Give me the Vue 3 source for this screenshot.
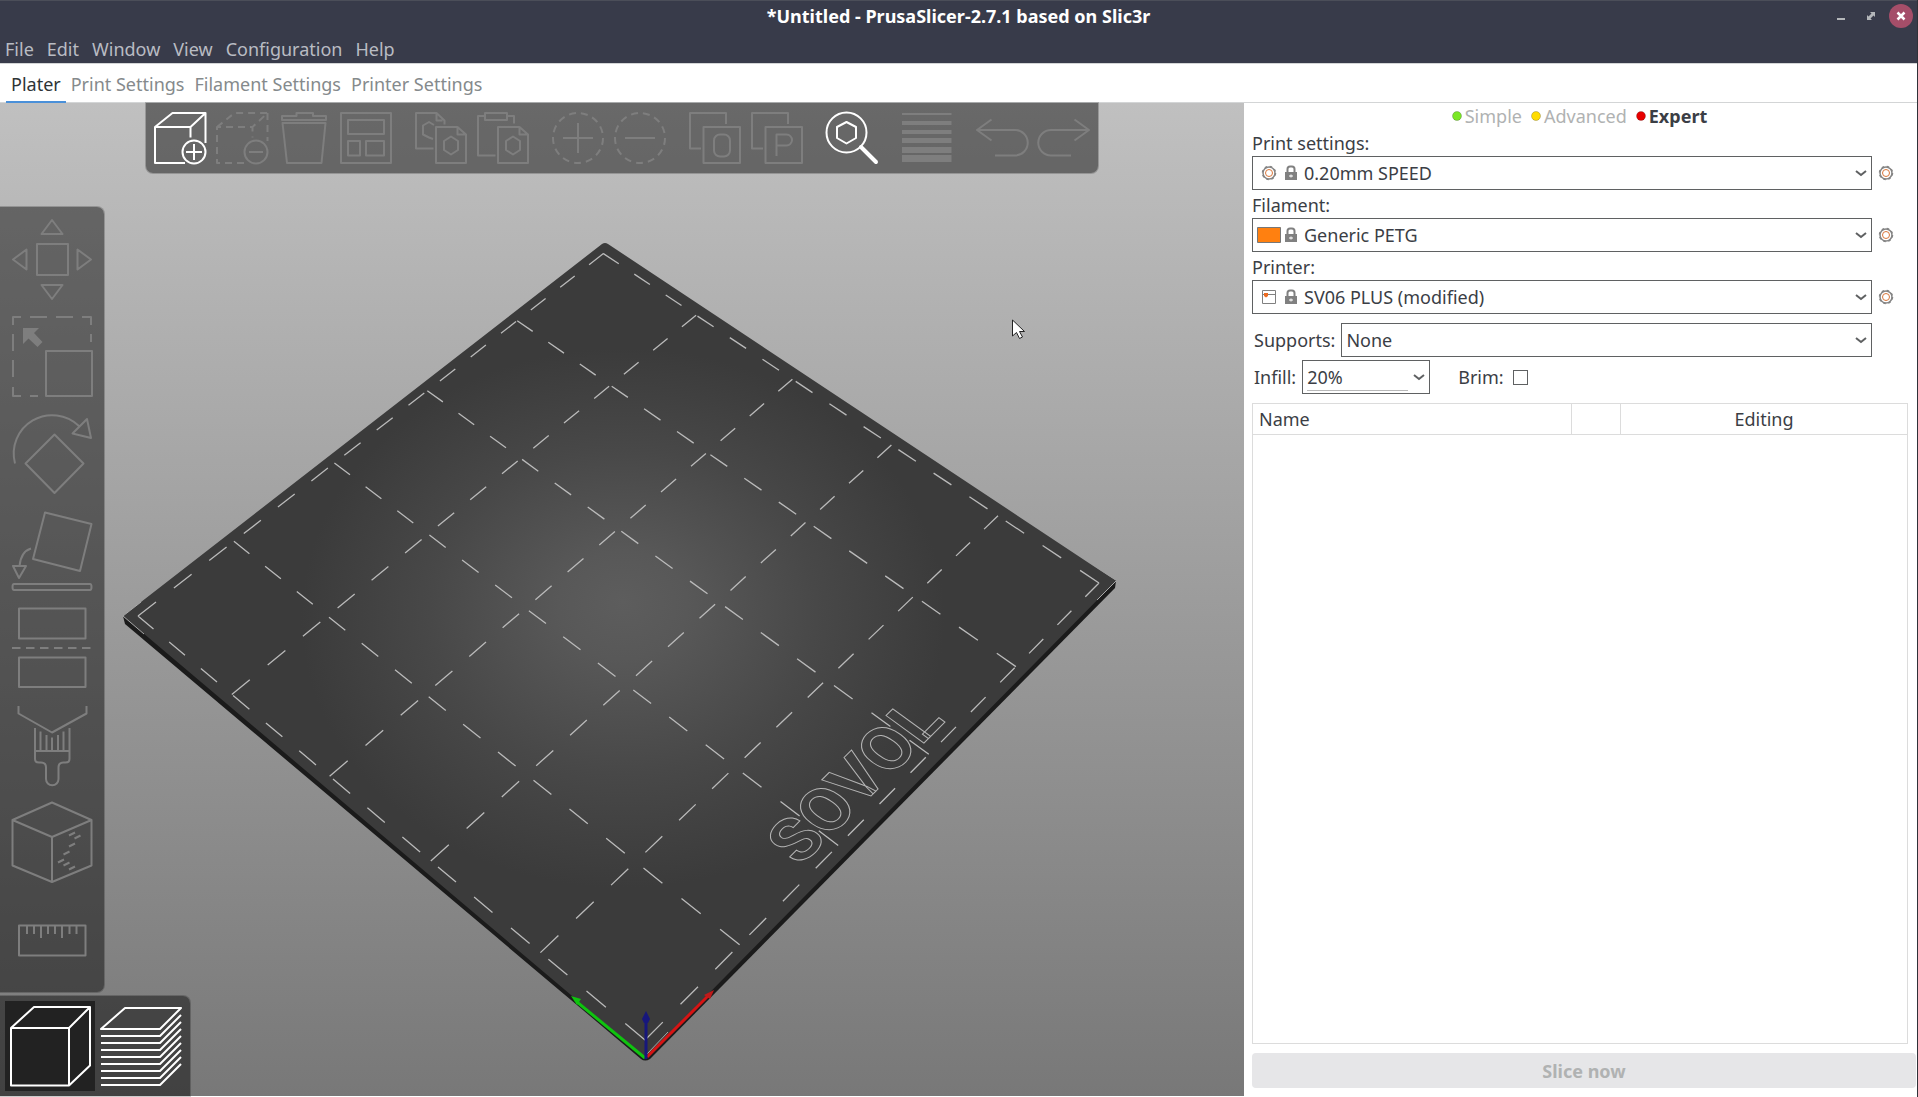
<script setup>
import { ref } from 'vue'

const menus = ['File', 'Edit', 'Window', 'View', 'Configuration', 'Help']
const tabs = ['Plater', 'Print Settings', 'Filament Settings', 'Printer Settings']
const activeTab = ref('Plater')

const modes = [
  { name: 'Simple', color: '#7be726' },
  { name: 'Advanced', color: '#ffdc00' },
  { name: 'Expert', color: '#e70000' }
]
const activeMode = ref('Expert')

const presets = [
  { id: 'print', label: 'Print settings:', value: '0.20mm SPEED' },
  { id: 'filament', label: 'Filament:', value: 'Generic PETG' },
  { id: 'printer', label: 'Printer:', value: 'SV06 PLUS (modified)' }
]

const infill = ref('20%')
const brim = ref(false)

const pageIcon = 'M21 15h21.5l8.5 7.5v28.5h-30zM42.5 15v7.5h8.5'
const pageHexagon = 'M36 24.5l7 4.5v9l-7 4.5l-7-4.5v-9z'

const toolGroups = [
  [
    {
      name: 'Add',
      active: true,
      paths: [
        'M31 51H1V15h35.5v10.5M1 15L18.5 1h33L36.5 15M51.500 1v30',
        'M51.500 40a11.500 11.500 0 1 1-23 0a11.500 11.500 0 1 1 23 0M32 40h16M40 32v16'
      ]
    },
    {
      name: 'Delete',
      paths: ['M51.500 40a11.500 11.500 0 1 1-23 0a11.500 11.500 0 1 1 23 0M33 40h14'],
      dashed: 'M28 51H1V15h35.500v10.500M1 15L18.500 1h33L36.500 15M51.500 1v28'
    },
    { name: 'Delete all', paths: ['M4 8V4h14.500V1h16.500v3h13v4zM4.500 11h43l-4 40h-34.500z'] },
    { name: 'Arrange', paths: ['M1 1h50v50H1zM8 8h36v14H8zM8 29h12v14.500H8zM26 29h18v14.500H26z'] }
  ],
  [
    {
      name: 'Copy',
      paths: ['M18.500 36.500H1V1h20.500l8 7.500v4M21.500 1v7.500h6M18 27l-4-1.500l-6-3v-9l6-3.500l5 3', pageIcon, pageHexagon]
    },
    { name: 'Paste', paths: ['M18.500 43.500H1V4h7M30 4h7v7.500M8 1h22v7H8z', pageIcon, pageHexagon] }
  ],
  [
    { name: 'Add instance', paths: ['M26 11v30M11 26h30'], dashed: 'M51 26a25 25 0 1 1-50 0a25 25 0 1 1 50 0' },
    { name: 'Remove instance', paths: ['M11 26h30'], dashed: 'M51 26a25 25 0 1 1-50 0a25 25 0 1 1 50 0' }
  ],
  [
    {
      name: 'Split to objects',
      paths: ['M12 36.500H1V1h36v11M14.500 15h36.500v36h-36.500z', 'M31 22.500h4a6 6 0 0 1 6 6v10a6 6 0 0 1-6 6h-4a6 6 0 0 1-6-6v-10a6 6 0 0 1 6-6z']
    },
    {
      name: 'Split to parts',
      paths: ['M12 36.500H1V1h36v11M14.500 15h36.500v36h-36.500z', 'M25.500 44v-21.500h10a5.500 5.500 0 0 1 0 11h-10']
    }
  ],
  [
    {
      name: 'Search',
      active: true,
      paths: ['M40.500 20.500a20 20 0 1 1-40 0a20 20 0 1 1 40 0M20.500 10l9.500 5v11l-9.500 5.500l-9.500-5.500v-11z'],
      bold: 'M35 35l3 3L50 50'
    }
  ],
  [
    {
      name: 'Variable layer height',
      fill: 'M1 1h49.500v2H1zM1 9h49.500v4H1zM1 18h49.500v4H1zM1 26h49.500v5H1zM1 35h49.500v6H1zM1 43h49.500v7H1z'
    }
  ],
  [
    { name: 'Undo', paths: ['M15.500 7.500L1 18l14.500 10.500M1 18h38a12.500 12.500 0 0 1 0 25.500H19'] },
    { name: 'Redo', paths: ['M36.500 7.500L51 18l-14.500 10.500M51 18h-38a12.500 12.500 0 0 0 0 25.500H33'] }
  ]
]

const gizmos = [
  {
    name: 'Move',
    path: 'M40 1l10.500 14h-21zM40 80l10.500-14h-21zM1 40.500l13.500-10v20zM79 40.500l-13.500-10v20zM25 25h31v31H25z'
  },
  {
    name: 'Scale',
    path: 'M1 9V1h8M18 1h17M44 1h17M70 1h9v8M79 18v8M1 18v17M1 44v17M1 71v9h8M18 80h8M34 35h46v45H34z',
    fill: 'M11 12h16l-5 5l8.500 9l-5 5l-9-8.500L11 28z'
  },
  {
    name: 'Rotate',
    path: 'M3 50.500A38.500 38.500 0 0 1 67 13M75 6l4 19l-18.500-4.500zM42.500 21.500l29 29l-29 29.500l-29-29.500z'
  },
  {
    name: 'Place on face',
    path: 'M33 2.500l46.500 11.500L68 61L21 49zM19 38.500q-10 3-11.500 17.500M1 56h13L7 68zM2 74h76q1.500 0 1.500 3t-1.500 3H2q-1.500 0-1.500-3t1.500-3z'
  },
  {
    name: 'Cut',
    path: 'M7 1.500h66.500v30H7zM7 50.500h66.500V80H7zM0 41h8.500M14 41h8.500M28 41h8.500M42 41h8.500M56 41h8.500M70 41h8.500'
  },
  {
    name: 'Paint-on supports',
    path: 'M6.500 2v7.500L40 28.500L74.500 9.500V2M23 24v31q0 3.500 4 3.500h2q5 0 5 5V75a6 6 0 0 0 12.500 0V63.500q0-5 5-5h2q4 0 4-3.500V24M23 47h34M28.500 27.500V47M34.500 31v16M40 33.500V47M46 31v16M51.500 27.500V47'
  },
  {
    name: 'Seam painting',
    path: 'M40 1.500L79.500 19v45.500L40 81L.500 64.500V19zM.500 19L40 36l39.500-17M40 36v45M57 34.500l6-3M62.500 37.500l6-3M57 45.500l6-3M51.500 53.500l6-3M46 61.500l6-3M51.500 64.500l6-3M57 68.500l6-3'
  },
  {
    name: 'Measure',
    path: 'M7 27.500h66.500v30H7zM15 28v8M22 28v8M29 28v12M36 28v8M43 28v8M50 28v12M57.500 28v8M64.500 28v8'
  }
]

// layer lines of the preview button, one below the other
const layerLines = Array.from({ length: 8 }, (_, i) => `M6 ${35 + i * 7}H65L86 ${14 + i * 7}`).join('')

// Maps bed coordinates (0..1 on both sides) to the tilted view.
const origin = [645, 1040]
const right = [1099, 583]
const left = [138, 616]
const perspX = 0.1446
const perspY = 0.1295

const project = (u, v) => {
  const w = 1 + perspX * u + perspY * v
  const axis = (k) =>
    (origin[k] + u * (right[k] * (1 + perspX) - origin[k]) + v * (left[k] * (1 + perspY) - origin[k])) / w
  return `${axis(0).toFixed(1)} ${axis(1).toFixed(1)}`
}

// Fifteen dashes on each line, a dash and a gap have the same length.
const gridStops = [0, 0.187, 0.393, 0.593, 0.796, 1]
const dashes = []
for (const stop of gridStops) {
  for (let i = 0; i < 15; i++) {
    const from = (i * 2) / 29
    const to = (i * 2 + 1) / 29
    dashes.push(`M${project(stop, from)}L${project(stop, to)}`)
    dashes.push(`M${project(from, stop)}L${project(to, stop)}`)
  }
}
const bedGrid = dashes.join('')
</script>

<template>
  <div class="window">
    <header class="titlebar">
      <h1 class="title">*Untitled - PrusaSlicer-2.7.1 based on Slic3r</h1>
      <div class="window-buttons">
        <button class="window-button" aria-label="Minimize">
          <svg width="24" height="24" viewBox="0 0 24 24"><path d="M8 14h8v2H8z" fill="#b4b7ba" /></svg>
        </button>
        <button class="window-button" aria-label="Restore">
          <svg width="24" height="24" viewBox="0 0 24 24">
            <path d="M11 8h5v5l-1.500-1.500L9.500 16.500H13H8v-5l1.500 1.500l5-5z" fill="none" />
            <path d="M11 8h5v5l-1.500-1.500l-1.500 1.500l-2-2l1.500-1.500zM8 11l1.500 1.500l1.500-1.500l2 2l-1.500 1.500L13 16H8z" fill="#b4b7ba" />
          </svg>
        </button>
        <button class="window-button window-button--close" aria-label="Close">
          <svg width="24" height="24" viewBox="0 0 24 24">
            <path d="M8.500 8.500l7 7M15.500 8.500l-7 7" stroke="#fff" stroke-width="2.500" />
          </svg>
        </button>
      </div>
    </header>

    <nav class="menubar">
      <a v-for="menu in menus" :key="menu" href="#" class="menu-item">{{ menu }}</a>
    </nav>

    <nav class="tabs">
      <button
        v-for="tab in tabs"
        :key="tab"
        class="tab"
        :class="{ 'tab--active': tab === activeTab }"
        @click="activeTab = tab"
      >
        {{ tab }}
      </button>
    </nav>

    <main class="plater">
      <section class="canvas">
        <svg class="scene" viewBox="0 103 1244 993">
          <defs>
            <radialGradient id="bed-light" gradientUnits="userSpaceOnUse" cx="0" cy="0" r="1" fy="-0.06" gradientTransform="translate(623 618) scale(322 270)">
              <stop offset="0" stop-color="#5d5d5d" />
              <stop offset="0.2" stop-color="#585858" />
              <stop offset="0.6" stop-color="#484848" />
              <stop offset="1" stop-color="#3b3b3b" />
            </radialGradient>
          </defs>
          <path d="M123 616L125 624L641 1059Q645 1062 650 1059L1115 588L1116 581L605 260z" fill="#1b1b1b" />
          <path d="M123 616L602 244Q605 242 608 244L1116 581L648 1055Q645 1058 642 1055z" fill="url(#bed-light)" />
          <path d="M144 634L123 616L141 602M1097 600L1116 581M647 1054L668 1032" class="bed-edge" />
          <path :d="bedGrid" class="bed-grid" />
          <text class="bed-label" transform="translate(800 867) rotate(-45) skewX(9)">SOVOL</text>
          <path d="M645 1058L577 1002" stroke="#0fc40f" stroke-width="3" />
          <path d="M571 996l10 3l-4 6z" fill="#0fc40f" />
          <path d="M647 1057L708 996" stroke="#d61414" stroke-width="3" />
          <path d="M714 990l-4 9l-6-4z" fill="#c01a1a" />
          <path d="M646 1059V1018" stroke="#17177c" stroke-width="3" />
          <path d="M646 1011l4 8l-2 4h-4l-2-4z" fill="#17177c" />
          <path d="M1012.500 320v16l4-3.500l3 6l3-1.500l-3-5.500h5z" fill="#fff" stroke="#222" />
        </svg>

        <div class="toolbar">
          <div v-for="(group, index) in toolGroups" :key="index" class="tool-group">
            <button
              v-for="tool in group"
              :key="tool.name"
              class="tool"
              :class="{ 'tool--active': tool.active }"
              :aria-label="tool.name"
            >
              <svg width="52" height="52" viewBox="0 0 52 52">
                <path v-for="path in tool.paths" :key="path" :d="path" class="line" />
                <path v-if="tool.dashed" :d="tool.dashed" class="line line--dashed" />
                <path v-if="tool.bold" :d="tool.bold" class="line line--bold" />
                <path v-if="tool.fill" :d="tool.fill" fill="currentColor" />
              </svg>
            </button>
          </div>
        </div>

        <div class="gizmos">
          <button v-for="gizmo in gizmos" :key="gizmo.name" class="tool" :aria-label="gizmo.name">
            <svg width="80" height="80" viewBox="0 0 80 80">
              <path :d="gizmo.path" class="line" />
              <path v-if="gizmo.fill" :d="gizmo.fill" fill="currentColor" />
            </svg>
          </button>
        </div>

        <div class="views">
          <button class="view view--active" aria-label="3D editor view">
            <svg width="90" height="90" viewBox="0 0 90 90">
              <path d="M6 27h58v57.500H6zM6 27L29 6h56v58.500L64 84.500M64 27L85 6" class="line" />
            </svg>
          </button>
          <button class="view" aria-label="Preview">
            <svg width="90" height="90" viewBox="0 0 90 90">
              <path d="M6 28h59L86 7H30z" class="line" />
              <path :d="layerLines" class="line" />
            </svg>
          </button>
        </div>
      </section>

      <aside class="sidebar">
        <div class="modes">
          <button
            v-for="mode in modes"
            :key="mode.name"
            class="mode"
            :class="{ 'mode--active': mode.name === activeMode }"
            @click="activeMode = mode.name"
          >
            <svg width="10" height="10" viewBox="0 0 10 10">
              <circle cx="5" cy="5" r="4.500" :fill="mode.color" stroke="#0003" />
            </svg>
            {{ mode.name }}
          </button>
        </div>

        <div v-for="preset in presets" :key="preset.id" class="preset">
          <label :for="preset.id">{{ preset.label }}</label>
          <div class="preset-row">
            <div class="combo combo--icons">
              <svg v-if="preset.id === 'print'" width="24" height="16" viewBox="0 0 24 16">
                <circle cx="12" cy="8" r="6" fill="none" stroke="#858585" stroke-width="1.500" />
                <circle cx="12" cy="8" r="6.500" fill="none" stroke="#858585" stroke-width="1.500" stroke-dasharray="2.500 2.600" />
                <circle cx="12" cy="8" r="3.500" fill="none" stroke="#d9763a" />
              </svg>
              <svg v-else-if="preset.id === 'filament'" width="24" height="16" viewBox="0 0 24 16">
                <path d="M.500 .500h23v15H.500z" fill="#ff8010" stroke="#777" />
              </svg>
              <svg v-else width="24" height="16" viewBox="0 0 24 16">
                <path d="M5.500 1.500h13v13h-13zM5.500 5.500h13" fill="none" stroke="#808080" />
                <path d="M7 4h4v3l-2 1.500l-2-1.500z" fill="#ed6b21" />
              </svg>
              <svg width="16" height="16" viewBox="0 0 16 16">
                <path d="M4.500 7V4q0-2.500 2.500-2.500h2q2.500 0 2.500 2.500v3" fill="none" stroke="#808080" stroke-width="2" />
                <path d="M2 7h12v8H2z" fill="#808080" />
                <path d="M6 11h4M8 9.500v3" stroke="#fff" />
              </svg>
              <select :id="preset.id" class="combo-select">
                <option>{{ preset.value }}</option>
              </select>
              <svg class="chevron" width="12" height="8" viewBox="0 0 12 8"><path d="M1 2l5 4l5-4" /></svg>
            </div>
            <button class="cog" :aria-label="'Edit ' + preset.id">
              <svg width="16" height="16" viewBox="0 0 16 16">
                <circle cx="8" cy="8" r="6" fill="none" stroke="#858585" stroke-width="1.500" />
                <circle cx="8" cy="8" r="6.500" fill="none" stroke="#858585" stroke-width="1.500" stroke-dasharray="2.500 2.600" />
                <circle cx="8" cy="8" r="3.500" fill="none" stroke="#d9763a" />
              </svg>
            </button>
          </div>
        </div>

        <div class="option-row option-row--supports">
          <label for="supports">Supports:</label>
          <div class="combo">
            <select id="supports" class="combo-select">
              <option>None</option>
            </select>
            <svg class="chevron" width="12" height="8" viewBox="0 0 12 8"><path d="M1 2l5 4l5-4" /></svg>
          </div>
        </div>

        <div class="option-row">
          <label for="infill">Infill:</label>
          <div class="combo combo--infill">
            <input id="infill" v-model="infill" type="text" class="infill-input" />
            <svg class="chevron" width="12" height="8" viewBox="0 0 12 8"><path d="M1 2l5 4l5-4" /></svg>
          </div>
          <label for="brim" class="brim-label">Brim:</label>
          <input id="brim" v-model="brim" type="checkbox" class="brim-box" />
        </div>

        <div class="object-list">
          <table class="object-table">
            <thead>
              <tr>
                <th class="col-name">Name</th>
                <th class="col-flag"></th>
                <th class="col-editing">Editing</th>
              </tr>
            </thead>
          </table>
        </div>

        <button class="slice" disabled>Slice now</button>
      </aside>
    </main>
  </div>
</template>

<style>
body {
  overflow: hidden;
}
</style>

<style scoped>
.window {
  box-sizing: border-box;
  display: flex;
  flex-direction: column;
  height: 100vh;
  border-right: 1px solid #2f3138;
  background: #fff;
  color: #3b3e45;
  font-family: 'Noto Sans', sans-serif;
  font-size: 18px;
  line-height: 26px;
}

button,
input,
select {
  margin: 0;
  padding: 0;
  border: 0;
  background: none;
  color: inherit;
  font: inherit;
}

svg {
  display: block;
}

.titlebar {
  display: grid;
  grid-template-columns: 1fr auto 1fr;
  align-items: center;
  height: 31px;
  box-sizing: border-box;
  border-top: 1px solid #4b4e59;
  background: #383b4a;
}

.title {
  grid-column: 2;
  margin: 0;
  color: #fff;
  font-size: 18px;
  font-weight: 700;
}

.window-buttons {
  display: flex;
  justify-content: flex-end;
  gap: 6px;
  padding-right: 4px;
}

.window-button {
  width: 24px;
  height: 24px;
  border-radius: 50%;
}

.window-button--close {
  background: #a54e69;
}

.menubar {
  display: flex;
  gap: 13px;
  height: 32px;
  padding-left: 5px;
  background: #383b4a;
  line-height: 36px;
}

.menu-item {
  color: #b9bcc3;
  text-decoration: none;
}

.tabs {
  display: flex;
  height: 40px;
  box-sizing: border-box;
  padding-left: 6px;
  border-bottom: 1px solid #d3d5d6;
  box-shadow: inset 0 2px 0 -1px #d3d5d6;
}

.tab {
  height: 40px;
  padding: 4px 5px 0;
  border-bottom: 2px solid transparent;
  box-sizing: border-box;
  color: #858a8c;
}

.tab--active {
  border-bottom-color: #4a90d9;
  color: #2e3436;
}

.plater {
  display: flex;
  flex: 1;
  min-height: 0;
}

.canvas {
  position: relative;
  flex: 1;
  margin-bottom: 1px;
  background: linear-gradient(#c0c0c0, #787878);
}

.scene {
  position: absolute;
  width: 100%;
  height: 100%;
}

.bed-grid {
  fill: none;
  stroke: #bababa;
  stroke-width: 1.3;
}

.bed-edge {
  fill: none;
  stroke: #a8a8a8;
}

.bed-label {
  fill: none;
  stroke: #b4b4b4;
  font-family: Roboto, sans-serif;
  font-size: 65px;
  font-weight: 700;
}

.toolbar,
.gizmos,
.views {
  position: absolute;
  display: flex;
  background: rgba(0, 0, 0, 0.455);
  box-shadow: 0 0 0 1px rgba(0, 0, 0, 0.2);
}

.toolbar {
  top: 0;
  left: 50%;
  gap: 23px;
  padding: 9px 8px;
  border-radius: 0 0 7px 7px;
  transform: translateX(-50%);
}

.tool-group {
  display: flex;
  gap: 10px;
}

.tool {
  color: #7e7e7e;
}

.tool--active {
  color: #fff;
}

.line {
  fill: none;
  stroke: currentColor;
  stroke-width: 2;
  stroke-linejoin: round;
}

.line--dashed {
  stroke-dasharray: 7 5;
}

.line--bold {
  stroke-width: 4;
  stroke-linecap: round;
}

.gizmos {
  top: 104px;
  left: 0;
  flex-direction: column;
  gap: 17px;
  padding: 12px 12px 14px;
  border-radius: 0 7px 7px 0;
}

.tool svg {
  overflow: visible;
}

.views {
  bottom: 0;
  left: 0;
  padding: 5px;
  border-radius: 0 7px 0 0;
}

.view {
  color: #fff;
}

.view--active {
  background: #222;
}

.sidebar {
  display: flex;
  flex-direction: column;
  width: 673px;
  box-sizing: border-box;
  padding: 0 1px 9px 8px;
}

.modes {
  display: flex;
  justify-content: center;
  gap: 9px;
  margin-bottom: 1px;
  padding-right: 9px;
}

.mode {
  display: flex;
  align-items: center;
  gap: 3px;
  color: #b0b2b2;
}

.mode--active {
  color: #3b3e45;
  font-weight: 700;
}

.preset {
  margin-bottom: 2px;
}

.preset label {
  display: block;
}

.preset-row {
  display: flex;
  align-items: center;
  gap: 6px;
  padding-right: 22px;
}

.combo {
  display: flex;
  flex: 1;
  align-items: center;
  box-sizing: border-box;
  height: 34px;
  padding: 0 4px;
  border: 1px solid #5f6162;
}

.combo--icons {
  gap: 2px;
}

.combo-select {
  flex: 1;
  appearance: none;
  outline: none;
}

.combo--icons .combo-select {
  padding-left: 3px;
}

.chevron {
  fill: none;
  stroke: #5f6162;
  stroke-width: 2;
  pointer-events: none;
}

.option-row {
  display: flex;
  align-items: center;
  gap: 6px;
  padding: 0 44px 0 2px;
}

.option-row--supports {
  margin: 7px 0 3px;
}

.combo--infill {
  flex: none;
  width: 128px;
}

.infill-input {
  flex: 1;
  min-width: 0;
  margin-right: 5px;
  border-bottom: 1px solid #b9b9b9;
}

.brim-label {
  margin-left: 22px;
}

.brim-box {
  width: 15px;
  height: 15px;
  margin-left: 3px;
  border: 1px solid #5f6162;
  appearance: none;
}

.object-list {
  flex: 1;
  margin: 9px 8px 9px 0;
  border: 1px solid #dcdcdc;
}

.object-table {
  width: 100%;
  border-collapse: collapse;
  table-layout: fixed;
}

.object-table th {
  height: 30px;
  padding: 0 6px;
  border-right: 1px solid #dcdcdc;
  border-bottom: 1px solid #dcdcdc;
  font-weight: 400;
}

.object-table .col-name {
  text-align: left;
}

.object-table .col-flag {
  width: 36px;
}

.object-table .col-editing {
  width: 274px;
  border-right: 0;
}

.slice {
  height: 35px;
  border-radius: 4px;
  background: #e6e6e8;
  color: #b0b2b2;
  font-weight: 700;
}
</style>
